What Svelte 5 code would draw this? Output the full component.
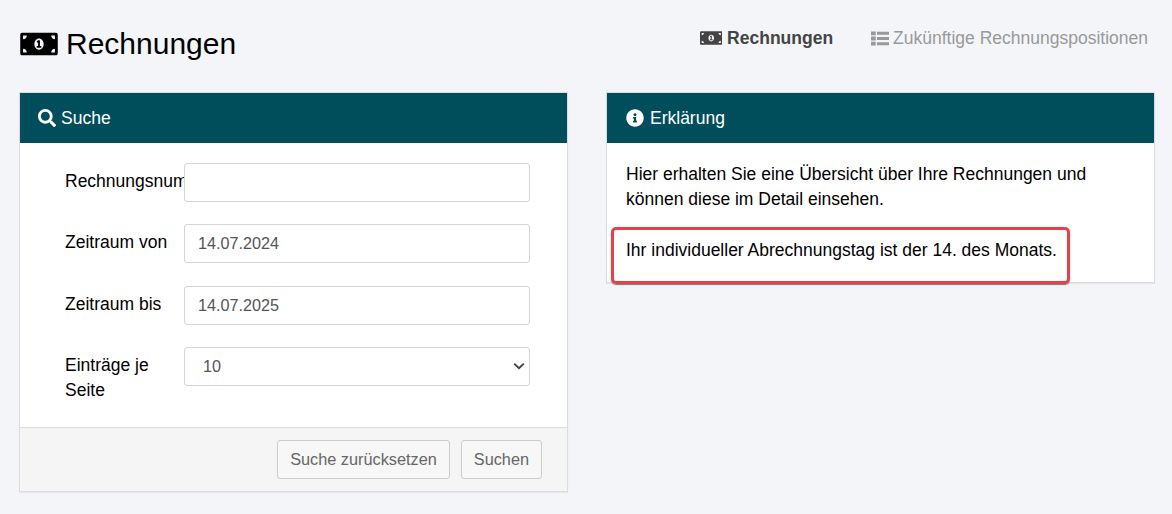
<script>
  const billPath = "M608 64H32C14.33 64 0 78.33 0 96v320c0 17.67 14.33 32 32 32h576c17.67 0 32-14.33 32-32V96c0-17.67-14.33-32-32-32zM48 400v-64c35.35 0 64 28.65 64 64H48zm0-224v-64h64c0 35.35-28.65 64-64 64zm272 176c-44.19 0-80-42.99-80-96 0-53.02 35.82-96 80-96s80 42.98 80 96c0 53.03-35.83 96-80 96zm272 48h-64c0-35.35 28.65-64 64-64v64zm0-224c-35.35 0-64-28.65-64-64h64v64z";
  const onePath = "M352 288h-16v-88c0-4.42-3.58-8-8-8h-13.58c-4.74 0-9.37 1.4-13.31 4.03l-15.33 10.22a7.994 7.994 0 0 0-2.22 11.09l8.88 13.31a7.994 7.994 0 0 0 11.09 2.22l.47-.31V288h-16c-4.42 0-8 3.58-8 8v16c0 4.42 3.58 8 8 8h64c4.42 0 8-3.58 8-8v-16c0-4.42-3.58-8-8-8z";
  const listPath = "M0 0h5v4H0zM0 5.5h5v4H0zM0 11h5v4H0zM6.3.5H19v3H6.3zM6.3 6H19v3H6.3zM6.3 11.5H19v3H6.3z";
  const searchPath = "M505 442.7L405.3 343c-4.5-4.5-10.6-7-17-7H372c27.6-35.3 44-79.7 44-128C416 93.1 322.9 0 208 0S0 93.1 0 208s93.1 208 208 208c48.3 0 92.7-16.4 128-44v16.3c0 6.4 2.5 12.5 7 17l99.7 99.7c9.4 9.4 24.6 9.4 33.9 0l28.3-28.3c9.4-9.4 9.4-24.6.1-34zM208 336c-70.7 0-128-57.2-128-128 0-70.7 57.2-128 128-128 70.7 0 128 57.2 128 128 0 70.7-57.2 128-128 128z";
  const infoPath = "M256 8C119.043 8 8 119.083 8 256c0 136.997 111.043 248 248 248s248-111.003 248-248C504 119.083 392.957 8 256 8zm0 110c23.196 0 42 18.804 42 42s-18.804 42-42 42-42-18.804-42-42 18.804-42 42-42zm56 254c0 6.627-5.373 12-12 12h-88c-6.627 0-12-5.373-12-12v-24c0-6.627 5.373-12 12-12h12v-64h-12c-6.627 0-12-5.373-12-12v-24c0-6.627 5.373-12 12-12h64c6.627 0 12 5.373 12 12v100h12c6.627 0 12 5.373 12 12v24z";
</script>

<div class="page">
  <header class="top">
    <h1>
      <svg class="bill-big" viewBox="0 0 640 512"><path d={billPath} /><path d={onePath} /></svg>
      Rechnungen
    </h1>
    <nav>
      <span class="tab active">
        <svg class="bill-small" viewBox="0 0 640 512"><path d={billPath} /><path d={onePath} /></svg>
        Rechnungen
      </span>
      <span class="tab">
        <svg class="list" viewBox="0 0 19 15"><path d={listPath} /></svg>
        Zukünftige Rechnungspositionen
      </span>
    </nav>
  </header>

  <div class="columns">
    <section class="card">
      <div class="card-head">
        <svg class="head-icon" viewBox="0 0 512 512"><path d={searchPath} /></svg>
        <span>Suche</span>
      </div>
      <form class="card-form">
        <div class="row">
          <label for="nr">Rechnungsnummer</label>
          <input id="nr" type="text" />
        </div>
        <div class="row">
          <label for="von">Zeitraum von</label>
          <input id="von" type="text" value="14.07.2024" />
        </div>
        <div class="row">
          <label for="bis">Zeitraum bis</label>
          <input id="bis" type="text" value="14.07.2025" />
        </div>
        <div class="row last">
          <label for="num">Einträge je Seite</label>
          <select id="num">
            <option>10</option>
            <option>25</option>
            <option>50</option>
          </select>
        </div>
      </form>
      <div class="card-foot">
        <button type="button">Suche zurücksetzen</button>
        <button type="button">Suchen</button>
      </div>
    </section>

    <section class="card info">
      <div class="card-head info-head">
        <svg class="head-icon" viewBox="0 0 512 512"><path d={infoPath} /></svg>
        <span>Erklärung</span>
      </div>
      <div class="card-text">
        <p>Hier erhalten Sie eine Übersicht über Ihre Rechnungen und können diese im Detail einsehen.</p>
        <p>Ihr individueller Abrechnungstag ist der 14. des Monats.</p>
      </div>
      <div class="highlight"></div>
    </section>
  </div>
</div>

<style>
  :global(body) {
    background: #f3f5f9;
    font-family: "Liberation Sans", Arial, sans-serif;
    font-size: 17.5px;
    color: #000;
  }
  .page {
    padding: 0 17px 22px 19px;
  }
  .top {
    display: flex;
    justify-content: space-between;
    height: 92px;
  }
  h1 {
    margin: 26px 0 0;
    font-size: 30px;
    font-weight: 400;
    line-height: 36px;
    display: flex;
    align-items: center;
    gap: 8px;
    height: 36px;
  }
  .bill-big {
    width: 38px;
    height: 30px;
    margin-left: 1px;
    fill: #000;
  }
  nav {
    display: flex;
    gap: 38px;
    margin: 28px 7px 0 0;
    height: 20px;
  }
  .tab {
    display: flex;
    align-items: center;
    gap: 4px;
    color: #999;
    line-height: 20px;
  }
  .tab.active {
    color: #444;
    font-weight: 700;
    gap: 5px;
  }
  .bill-small {
    width: 22.5px;
    height: 18px;
    fill: #444;
  }
  .list {
    width: 18px;
    height: 15px;
    fill: #999;
  }
  .columns {
    display: grid;
    grid-template-columns: 549px 549px;
    gap: 38px;
    align-items: start;
  }
  .card {
    position: relative;
    box-sizing: border-box;
    background: #fff;
    border: 1px solid #dcdcdc;
    box-shadow: 0 1px 1px rgba(0, 0, 0, 0.05);
  }
  .card-head {
    display: flex;
    align-items: center;
    gap: 5px;
    height: 50px;
    padding: 0 18px;
    background: #004e5c;
    color: #fff;
  }
  .info-head {
    padding-left: 19px;
    gap: 6px;
  }
  .head-icon {
    width: 18px;
    height: 18px;
    fill: #fff;
  }
  .card-form {
    padding: 20px 37px 24px 45px;
  }
  .row {
    display: grid;
    grid-template-columns: 119px 346px;
    margin-bottom: 22.33px;
  }
  .row.last {
    margin-bottom: 0;
  }
  label {
    line-height: 25px;
    padding-top: 6px;
  }
  .row:first-child label {
    white-space: nowrap;
    width: 119px;
  }
  input,
  select {
    position: relative;
    box-sizing: border-box;
    width: 346px;
    height: 39px;
    border: 1px solid #d4d4d4;
    border-radius: 3px;
    background-color: #fff;
    color: #555;
    font-family: inherit;
    font-size: 16.2px;
    outline: none;
  }
  input {
    padding: 0 13px;
  }
  select {
    appearance: none;
    padding: 0 10px 0 18px;
    background-image: url("data:image/svg+xml,%3Csvg xmlns='http://www.w3.org/2000/svg' viewBox='0 0 12 8'%3E%3Cpath d='M1.2 1.6L6 6.2l4.8-4.6' fill='none' stroke='%23444' stroke-width='2'/%3E%3C/svg%3E");
    background-repeat: no-repeat;
    background-position: right 4px center;
    background-size: 12px 8px;
  }
  .card-foot {
    display: flex;
    justify-content: flex-end;
    gap: 11px;
    height: 64px;
    box-sizing: border-box;
    padding: 12px 25px 0;
    background: #f5f5f5;
    border-top: 1px solid #dcdcdc;
  }
  button {
    height: 39px;
    padding: 0 12px;
    border: 1px solid #ccc;
    border-radius: 3px;
    background: #f7f7f7;
    color: #666;
    font-family: inherit;
    font-size: 16.3px;
  }
  .card-text {
    padding: 19px 19px 19px;
    line-height: 25px;
  }
  p {
    margin: 0 0 26px;
  }
  p:last-child {
    margin-bottom: 0;
  }
  /* annotation drawn over the card */
  .highlight {
    position: absolute;
    left: 4px;
    top: 134px;
    box-sizing: border-box;
    width: 459px;
    height: 57px;
    border: 3px solid #e6404a;
    border-radius: 5px;
    box-shadow: 0 1px 1px #777;
  }
</style>
